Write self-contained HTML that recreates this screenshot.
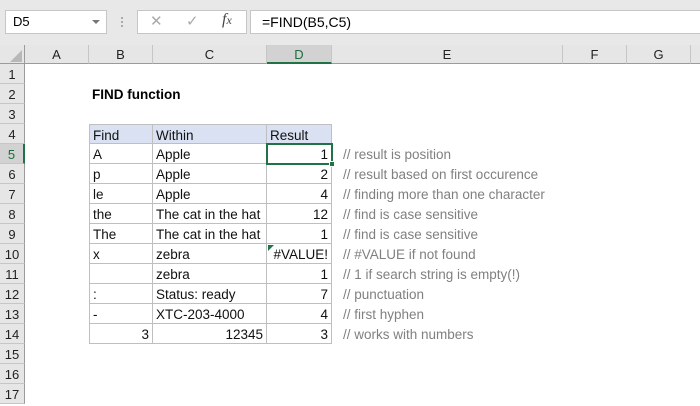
<!DOCTYPE html>
<html><head><style>
*{margin:0;padding:0;box-sizing:border-box}
body{width:700px;height:400px;overflow:hidden;background:#fff;font-family:"Liberation Sans",Calibri,sans-serif;font-size:13px;position:relative}
.a{position:absolute}
.ch{position:absolute;top:45px;height:19px;background:#e6e6e6;border-right:1px solid #c6c6c6;border-bottom:1px solid #9b9b9b;text-align:center;line-height:20px;font-size:13px;color:#222}
.rh{position:absolute;left:0;width:25px;height:20px;background:#e6e6e6;border-bottom:1px solid #c6c6c6;border-right:1px solid #9b9b9b;text-align:center;line-height:22px;font-size:13px;color:#222}
.c{position:absolute;height:20px;line-height:22px;padding:0 3px;border-right:1px solid #bfbfbf;border-bottom:1px solid #bfbfbf;white-space:nowrap;overflow:hidden;font-size:13.5px;color:#111}
.r{text-align:right}
.cm{position:absolute;left:343px;height:20px;line-height:22px;color:#808080;font-size:13.5px;white-space:nowrap}
</style></head><body>
<div class="a" style="left:0;top:0;width:700px;height:45px;background:#e8e8e8"></div>
<div class="a" style="left:5px;top:10px;width:102px;height:24px;background:#fff;border:1px solid #c6c6c6;line-height:22px;padding-left:7px;font-size:13px">D5</div>
<div class="a" style="left:92px;top:20px;width:0;height:0;border-left:4px solid transparent;border-right:4px solid transparent;border-top:4px solid #777"></div>
<div class="a" style="left:121px;top:17px;width:2px;height:10px;border-left:2px dotted #aaa"></div>
<div class="a" style="left:137px;top:10px;width:110px;height:24px;background:#fff;border:1px solid #c6c6c6"></div>
<div class="a" style="left:150px;top:12px;color:#aaa;font-size:15px">✕</div>
<div class="a" style="left:186px;top:12px;color:#aaa;font-size:15px">✓</div>
<div class="a" style="left:222px;top:11px;color:#444;font-size:16px;font-style:italic;font-family:'Liberation Serif',serif">f<span style="font-size:12px">x</span></div>
<div class="a" style="left:250px;top:10px;width:450px;height:24px;background:#fff;border:1px solid #c6c6c6;border-right:none;line-height:22px;padding-left:11px;font-size:14px">=FIND(B5,C5)</div>
<div class="a" style="left:0;top:45px;width:25px;height:19px;background:#e6e6e6;border-right:1px solid #9b9b9b;border-bottom:1px solid #9b9b9b"></div>
<div class="a" style="left:10px;top:50px;width:0;height:0;border-left:12px solid transparent;border-bottom:12px solid #b8b8b8"></div>
<div class="ch" style="left:25px;width:64px">A</div>
<div class="ch" style="left:89px;width:64px">B</div>
<div class="ch" style="left:153px;width:114px">C</div>
<div class="ch" style="left:267px;width:65px;background:#d2d2d2;color:#1e6b3c;border-bottom:2px solid #217346">D</div>
<div class="ch" style="left:332px;width:231px">E</div>
<div class="ch" style="left:563px;width:64px">F</div>
<div class="ch" style="left:627px;width:64px">G</div>
<div class="ch" style="left:691px;width:9px;border-right:none"></div>
<div class="rh" style="top:64px">1</div><div class="rh" style="top:84px">2</div><div class="rh" style="top:104px">3</div><div class="rh" style="top:124px">4</div>
<div class="rh" style="top:144px;background:#d2d2d2;color:#1e6b3c;border-right:2px solid #217346">5</div>
<div class="rh" style="top:164px">6</div><div class="rh" style="top:184px">7</div><div class="rh" style="top:204px">8</div><div class="rh" style="top:224px">9</div><div class="rh" style="top:244px">10</div><div class="rh" style="top:264px">11</div><div class="rh" style="top:284px">12</div><div class="rh" style="top:304px">13</div><div class="rh" style="top:324px">14</div><div class="rh" style="top:344px">15</div><div class="rh" style="top:364px">16</div><div class="rh" style="top:384px">17</div>
<div class="a" style="left:92px;top:84px;height:20px;line-height:22px;font-weight:bold;font-size:13.5px">FIND function</div>
<div class="a" style="left:89px;top:124px;width:243px;height:220px;border-left:1px solid #bfbfbf;border-top:1px solid #bfbfbf"></div>
<div class="c" style="left:90px;top:125px;width:63px;height:19px;background:#d9e1f2">Find</div>
<div class="c" style="left:153px;top:125px;width:114px;height:19px;background:#d9e1f2">Within</div>
<div class="c" style="left:267px;top:125px;width:65px;height:19px;background:#d9e1f2">Result</div>
<div class="c" style="left:90px;top:144px;width:63px">A</div><div class="c" style="left:153px;top:144px;width:114px">Apple</div><div class="c r" style="left:267px;top:144px;width:65px">1</div>
<div class="c" style="left:90px;top:164px;width:63px">p</div><div class="c" style="left:153px;top:164px;width:114px">Apple</div><div class="c r" style="left:267px;top:164px;width:65px">2</div>
<div class="c" style="left:90px;top:184px;width:63px">le</div><div class="c" style="left:153px;top:184px;width:114px">Apple</div><div class="c r" style="left:267px;top:184px;width:65px">4</div>
<div class="c" style="left:90px;top:204px;width:63px">the</div><div class="c" style="left:153px;top:204px;width:114px">The cat in the hat</div><div class="c r" style="left:267px;top:204px;width:65px">12</div>
<div class="c" style="left:90px;top:224px;width:63px">The</div><div class="c" style="left:153px;top:224px;width:114px">The cat in the hat</div><div class="c r" style="left:267px;top:224px;width:65px">1</div>
<div class="c" style="left:90px;top:244px;width:63px">x</div><div class="c" style="left:153px;top:244px;width:114px">zebra</div><div class="c r" style="left:267px;top:244px;width:65px">#VALUE!</div>
<div class="c" style="left:90px;top:264px;width:63px"></div><div class="c" style="left:153px;top:264px;width:114px">zebra</div><div class="c r" style="left:267px;top:264px;width:65px">1</div>
<div class="c" style="left:90px;top:284px;width:63px">:</div><div class="c" style="left:153px;top:284px;width:114px">Status: ready</div><div class="c r" style="left:267px;top:284px;width:65px">7</div>
<div class="c" style="left:90px;top:304px;width:63px">-</div><div class="c" style="left:153px;top:304px;width:114px">XTC-203-4000</div><div class="c r" style="left:267px;top:304px;width:65px">4</div>
<div class="c r" style="left:90px;top:324px;width:63px">3</div><div class="c r" style="left:153px;top:324px;width:114px">12345</div><div class="c r" style="left:267px;top:324px;width:65px">3</div>
<div class="a" style="left:268px;top:245px;width:0;height:0;border-right:6px solid transparent;border-top:6px solid #217346"></div>
<div class="a" style="left:266px;top:143px;width:67px;height:22px;border:2px solid #217346"></div>
<div class="a" style="left:329px;top:161px;width:6px;height:6px;background:#217346;border:1px solid #fff"></div>
<div class="cm" style="top:144px">// result is position</div>
<div class="cm" style="top:164px">// result based on first occurence</div>
<div class="cm" style="top:184px">// finding more than one character</div>
<div class="cm" style="top:204px">// find is case sensitive</div>
<div class="cm" style="top:224px">// find is case sensitive</div>
<div class="cm" style="top:244px">// #VALUE if not found</div>
<div class="cm" style="top:264px">// 1 if search string is empty(!)</div>
<div class="cm" style="top:284px">// punctuation</div>
<div class="cm" style="top:304px">// first hyphen</div>
<div class="cm" style="top:324px">// works with numbers</div>
</body></html>
